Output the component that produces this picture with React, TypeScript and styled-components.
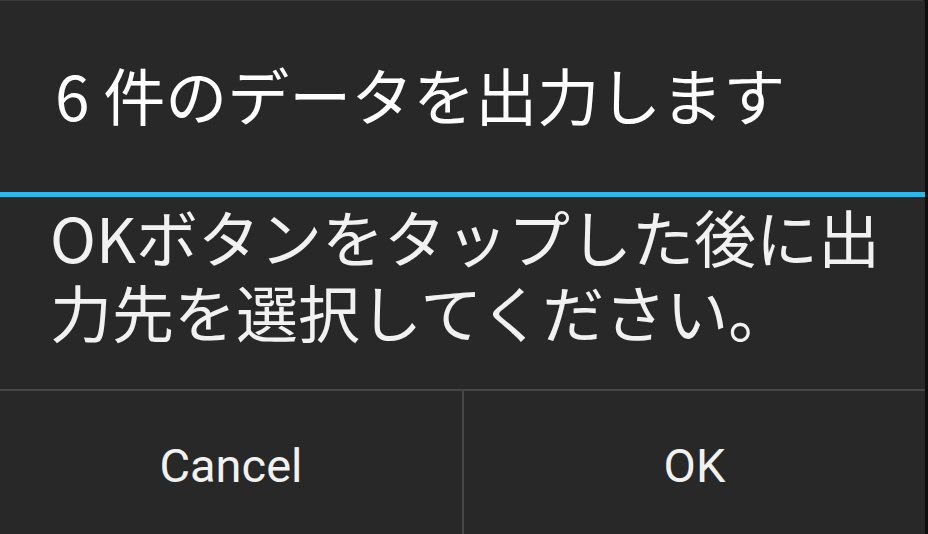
import { createGlobalStyle, styled } from "styled-components";

const GlobalStyle = createGlobalStyle`
  html, body {
    margin: 0;
    padding: 0;
    background: #0e0e0e;
    overflow: hidden;
  }
`;

const Dialog = styled.div`
  width: 925px;
  height: 534px;
  background: #282828;
  border-top: 1px solid #3a3a3a;
  border-top-right-radius: 3px;
  display: flex;
  flex-direction: column;
  box-sizing: border-box;
  overflow: hidden;
`;

const TitleBar = styled.div`
  height: 196px;
  box-sizing: border-box;
  display: flex;
  align-items: center;
  padding: 0 0 6px 55px;
  border-bottom: 5px solid #33b5e5;
  font-family: "Noto Sans CJK JP", sans-serif;
  font-size: 62px;
  color: #ffffff;
`;

const Message = styled.div`
  height: 194px;
  box-sizing: border-box;
  padding: 2px 10px 0 50px;
  border-bottom: 2px solid #474747;
  font-family: "Noto Sans CJK JP", sans-serif;
  font-size: 62px;
  line-height: 75px;
  color: #f1f1f1;
`;

const ButtonBar = styled.div`
  flex: 1;
  display: grid;
  grid-template-columns: 462px 2px 1fr;
`;

const Divider = styled.div`
  background: #474747;
`;

const DialogButton = styled.button`
  background: transparent;
  border: 0;
  padding: 6px 0 0;
  color: #f1f1f1;
  font-family: Roboto, "Liberation Sans", sans-serif;
  font-size: 47px;
  cursor: pointer;
`;

export default function App() {
  return (
    <>
      <GlobalStyle />
      <Dialog>
        <TitleBar>6 件のデータを出力します</TitleBar>
        <Message>
          OKボタンをタップした後に出
          <br />
          力先を選択してください。
        </Message>
        <ButtonBar>
          <DialogButton>Cancel</DialogButton>
          <Divider />
          <DialogButton>OK</DialogButton>
        </ButtonBar>
      </Dialog>
    </>
  );
}
